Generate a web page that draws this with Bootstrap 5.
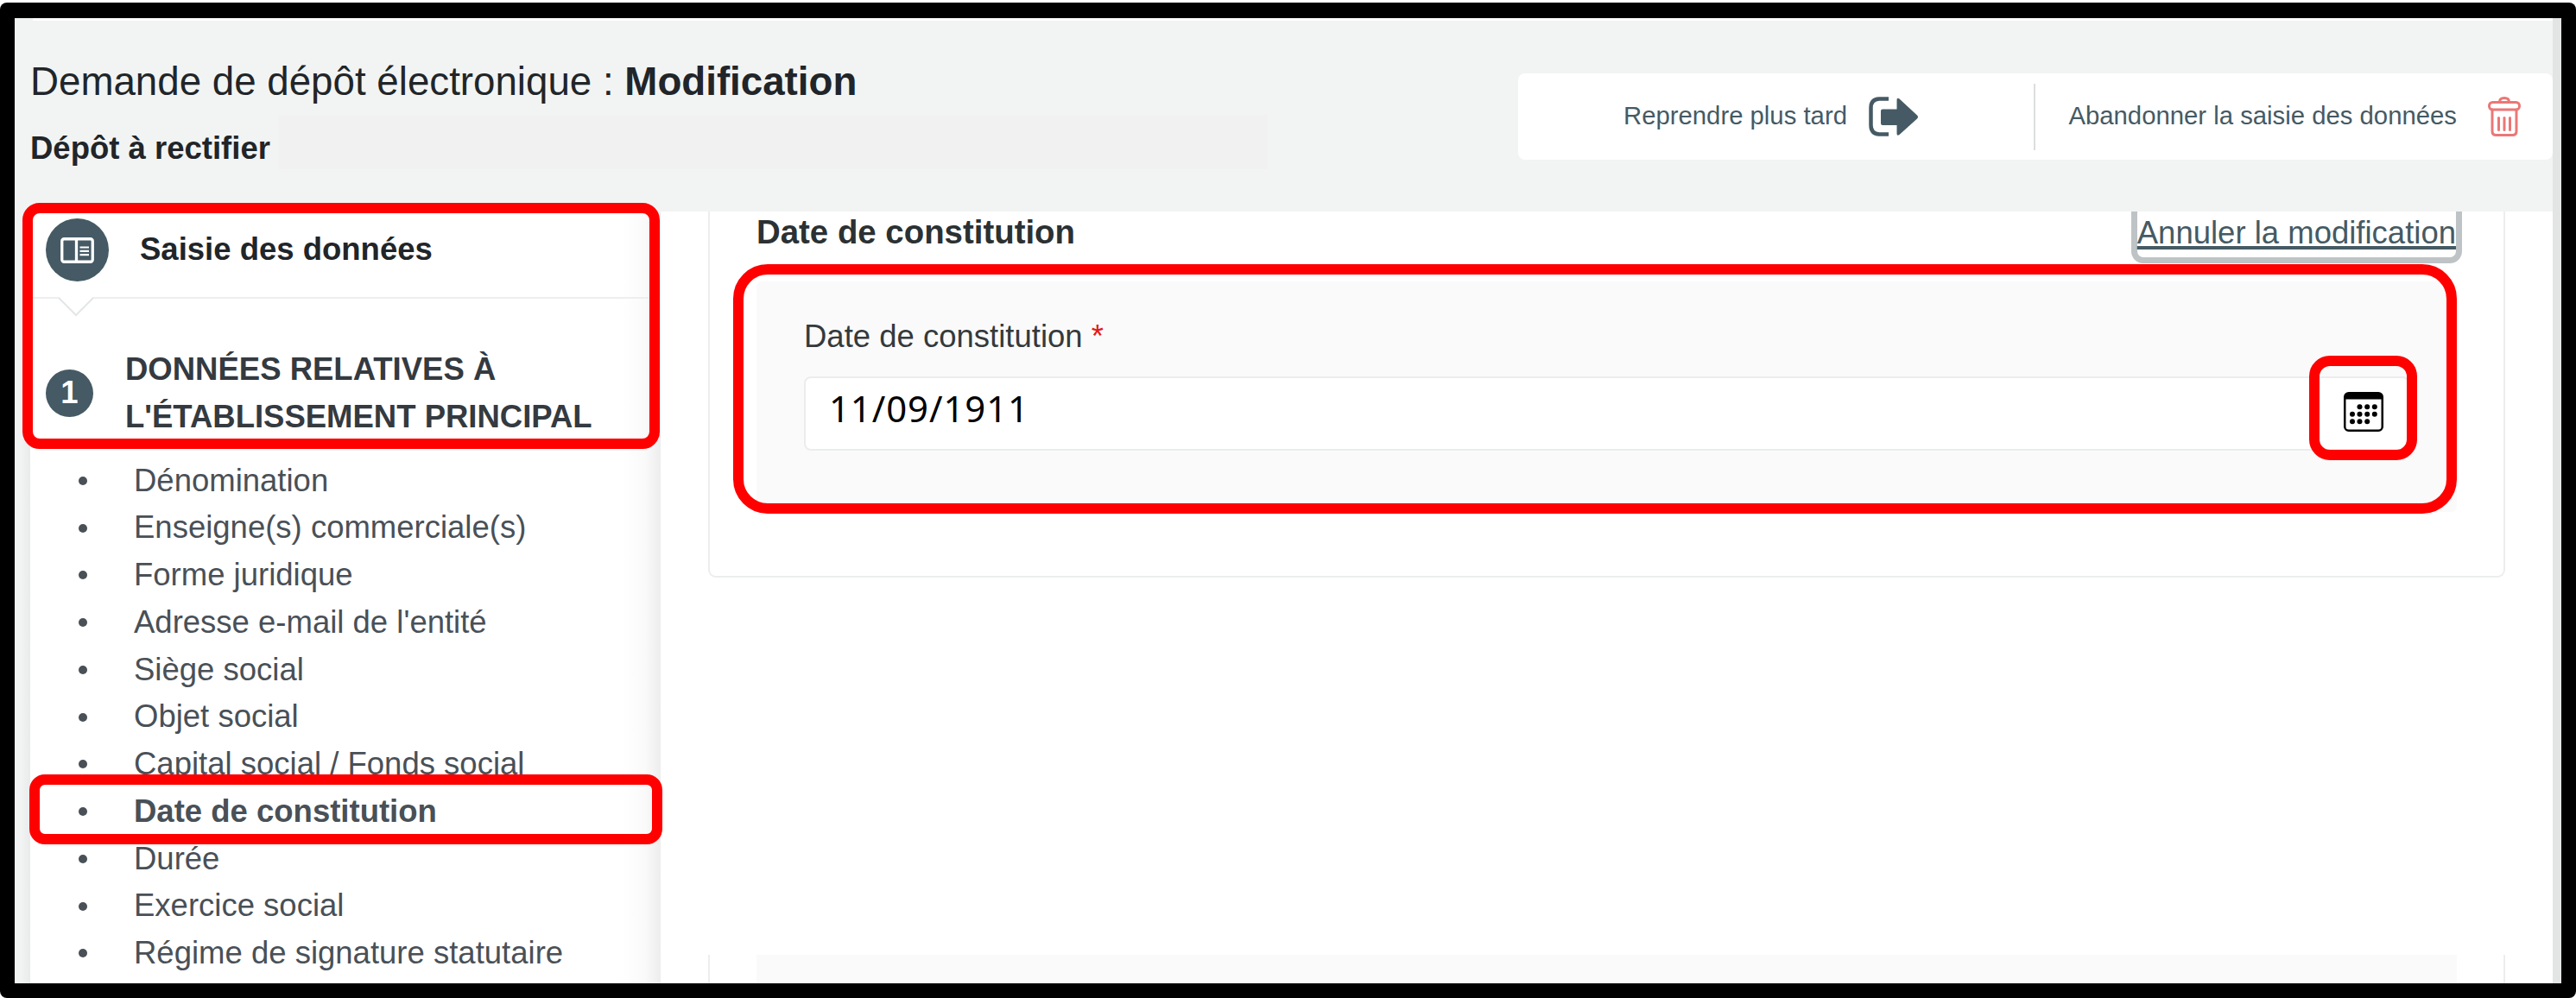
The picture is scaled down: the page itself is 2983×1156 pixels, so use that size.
<!DOCTYPE html>
<html lang="fr">
  <head>
    <meta charset="UTF-8" />
    <title>Demande de dépôt électronique</title>
    <link
      href="https://cdn.jsdelivr.net/npm/bootstrap@5.3.0/dist/css/bootstrap.min.css"
      rel="stylesheet"
    />
    <style>
      body {
        font-family: "Liberation Sans", Arial, sans-serif;
        font-size: 36.5px;
        line-height: 54.75px;
        color: #212529;
        background: #fff;
      }
      .frame {
        width: 2983px;
        height: 1153px;
        margin-top: 3px;
        padding: 18px 17px 17px;
        background: #000;
        border-radius: 8px;
      }
      .scroll-track { width: 10px; background: #e2e5e4; }

      /* header */
      .page-head { height: 224px; background: #f2f4f3; padding-left: 18px; }
      .head-strip { height: 3px; margin-left: 3px; background: #fff; }
      .head-title { font-size: 45.7px; line-height: 56px; margin: 43px 0 10px; }
      .head-ref { height: 63px; }
      .head-ref span { padding-top: 12px; width: 287px; }
      .ref-mask { width: 1146px; background: #f1f1f1; }
      .actions {
        width: 1198px;
        height: 100px;
        margin-top: 61px;
        border-radius: 8px;
        font-size: 29.3px;
        color: #455a64;
      }
      .actions span { padding-bottom: 2px; white-space: nowrap; }
      .act-later { width: 597px; padding-left: 122px; gap: 25px; }
      .act-sep { width: 2px; height: 77px; background: #dcdedd; }
      .act-drop { padding-right: 37px; gap: 36px; }

      /* side menu */
      .side-gutter { width: 18px; background: linear-gradient(90deg, #f2f4f3 40%, #e9ebea); }
      .side {
        width: 730px;
        background: linear-gradient(90deg, #fff 94%, #fafafa 97.5%, #ededed);
      }
      .side-head { height: 99px; padding: 0 0 10px 18px; gap: 36px; }
      .dot-icon { width: 73px; height: 73px; background: #455a64; }
      .side-line { height: 2px; background: #eceeef; }
      .side-arrow { margin: -2px 0 0 32px; }
      .side-section { margin-top: 34px; padding-left: 18px; gap: 37px; color: #343a40; }
      .step-no { width: 55px; height: 55px; background: #455a64; }
      .side-list { margin: 19px 0 0; color: #495057; }
      .side-list li { padding-left: 56px; gap: 54px; }
      .side-list li::before {
        content: "";
        width: 10px;
        height: 10px;
        border-radius: 50%;
        background: currentColor;
      }

      /* form area */
      .form-area { padding: 0 55px 0 55px; }
      .form-box {
        height: 424px;
        padding: 0 54px;
        border: 2px solid #eceeed;
        border-top: 0;
        border-radius: 0 0 9px 9px;
      }
      .box-head { height: 81px; }
      .box-title { font-size: 38.4px; line-height: 48px; color: #2b3133; }
      .cancel-link {
        height: 60px;
        line-height: 50.5px;
        margin-right: -6px;
        border: 7px solid #bec3c6;
        border-top: 0;
        border-radius: 0 0 14px 14px;
        color: #455a64;
        text-underline-offset: 3px;
        text-decoration-thickness: 4px;
        text-decoration-skip-ink: none;
      }
      .field-panel { height: 267px; background: #fafafa; padding: 39px 55px 0 55px; border-radius: 6px; }
      .field-label { line-height: 50px; margin-bottom: 21px; color: #343a3d; }
      .req { color: #e3191b; }
      .date-box { height: 86px; border: 2px solid #ebedec; border-radius: 8px; padding-right: 28px; }
      .date-box input {
        font: 41.9px "Noto Sans", sans-serif;
        letter-spacing: 0.9px;
        color: #000;
        padding: 0 0 13px 27px;
      }
      .date-box svg { margin-bottom: 5px; }
      .next-box {
        height: 33px;
        padding: 0 54px;
        border: solid #eceeed;
        border-width: 0 2px;
      }
      .next-box div { height: 100%; background: #fafafa; }

      /* red callouts, drawn over the page */
      .callout { position: absolute; border: 12px solid #f00; pointer-events: none; }
      .c-menu { left: 26px; top: 235px; width: 738px; height: 285px; border-radius: 20px; }
      .c-item { left: 34px; top: 897px; width: 733px; height: 81px; border-radius: 18px; }
      .c-field { left: 849px; top: 306px; width: 1996px; height: 289px; border-radius: 40px; }
      .c-cal { left: 2674px; top: 412px; width: 125px; height: 121px; border-radius: 24px; }
    </style>
  </head>
  <body class="position-relative overflow-hidden">
    <div class="frame d-flex overflow-hidden">
      <div class="flex-grow-1 d-flex flex-column bg-white overflow-hidden">
        <header class="page-head flex-shrink-0">
          <div class="head-strip"></div>
          <div class="d-flex justify-content-between align-items-start">
            <div>
              <h1 class="head-title fw-normal">Demande de dépôt électronique : <b>Modification</b></h1>
              <div class="head-ref d-flex">
                <span class="fw-bold">Dépôt à rectifier</span>
                <div class="ref-mask"></div>
              </div>
            </div>
            <div class="actions bg-white d-flex align-items-center">
              <div class="act-later d-flex align-items-center">
                <span>Reprendre plus tard</span>
                <svg width="58" height="46" viewBox="0 0 58 46">
                  <path d="M23 2.500H12Q2.500 3 2.500 13v20Q2.500 43 12 43.500H23" fill="none" stroke="#455a64" stroke-width="4.500" />
                  <path d="M16 14.500h16.500V4q0-3.500 3-1.500L56 21.500q2 2 0 4L35.500 44Q32.500 46 32.500 42.500V33H16q-2 0-2-2V16.500q0-2 2-2z" fill="#455a64" />
                </svg>
              </div>
              <div class="act-sep"></div>
              <div class="act-drop flex-grow-1 d-flex align-items-center justify-content-end">
                <span>Abandonner la saisie des données</span>
                <svg width="38" height="46" viewBox="0 0 38 46" fill="none" stroke="#eb7777" stroke-width="3" stroke-linecap="round">
                  <path d="M13.500 6q0-4.500 5.500-4.500T24.500 6" />
                  <rect x="1.500" y="6.500" width="35" height="8.500" rx="4" />
                  <path d="M5 15v25q0 4.500 4.500 4.500h19q4.500 0 4.500-4.500V15" />
                  <path d="M12.500 24.500v14M19 24.500v14M25.500 24.500v14" />
                </svg>
              </div>
            </div>
          </div>
        </header>

        <div class="flex-grow-1 d-flex">
          <div class="side-gutter"></div>
          <nav class="side">
            <div class="side-head d-flex align-items-center">
              <div class="dot-icon rounded-circle d-flex align-items-center justify-content-center">
                <svg width="39" height="30" viewBox="0 0 39 30" fill="none" stroke="#fff">
                  <rect x="1.750" y="1.750" width="35.500" height="26.500" rx="2.500" stroke-width="3.300" />
                  <path d="M18.500 2v26" stroke-width="3.300" />
                  <path d="M22.500 11.500h10.500M22.500 15.800h10.500M22.500 20.200h10.500" stroke-width="2.200" />
                </svg>
              </div>
              <span class="fw-bold">Saisie des données</span>
            </div>
            <div class="side-line"></div>
            <svg class="side-arrow d-block" width="42" height="23" viewBox="0 0 42 23">
              <path d="M1 0L21 21L41 0z" fill="#fff" />
              <path d="M1 1L21 21L41 1" fill="none" stroke="#e4e6e8" stroke-width="2" />
            </svg>
            <div class="side-section d-flex align-items-center fw-bold">
              <div class="step-no rounded-circle text-white d-flex align-items-center justify-content-center">1</div>
              <div>DONNÉES RELATIVES À<br />L'ÉTABLISSEMENT PRINCIPAL</div>
            </div>
            <ul class="side-list list-unstyled">
              <li class="d-flex align-items-center">Dénomination</li>
              <li class="d-flex align-items-center">Enseigne(s) commerciale(s)</li>
              <li class="d-flex align-items-center">Forme juridique</li>
              <li class="d-flex align-items-center">Adresse e-mail de l'entité</li>
              <li class="d-flex align-items-center">Siège social</li>
              <li class="d-flex align-items-center">Objet social</li>
              <li class="d-flex align-items-center">Capital social / Fonds social</li>
              <li class="d-flex align-items-center fw-bold">Date de constitution</li>
              <li class="d-flex align-items-center">Durée</li>
              <li class="d-flex align-items-center">Exercice social</li>
              <li class="d-flex align-items-center">Régime de signature statutaire</li>
            </ul>
          </nav>

          <main class="form-area flex-grow-1 d-flex flex-column justify-content-between">
            <section class="form-box">
              <div class="box-head d-flex justify-content-between align-items-start">
                <h2 class="box-title fw-bold m-0">Date de constitution</h2>
                <a href="#" class="cancel-link">Annuler la modification</a>
              </div>
              <div class="field-panel">
                <label for="dateConstitution" class="field-label d-block">Date de constitution <span class="req">*</span></label>
                <div class="date-box bg-white d-flex align-items-center">
                  <input id="dateConstitution" type="text" class="flex-grow-1 h-100 border-0 bg-transparent" value="11/09/1911" />
                  <svg width="46" height="46" viewBox="0 0 46 46">
                    <rect x="1.250" y="1.250" width="43.500" height="43.500" rx="4.500" fill="#fff" stroke="#000" stroke-width="2.500" />
                    <path d="M1 8.500V5q0-4 4-4h36q4 0 4 4v3.500z" />
                    <g>
                      <circle cx="18.500" cy="17.300" r="3" /><circle cx="27.200" cy="17.300" r="3" /><circle cx="35.800" cy="17.300" r="3" />
                      <circle cx="10" cy="25.800" r="3" /><circle cx="18.500" cy="25.800" r="3" /><circle cx="27.200" cy="25.800" r="3" /><circle cx="35.800" cy="25.800" r="3" />
                      <circle cx="10" cy="34.200" r="3" /><circle cx="18.500" cy="34.200" r="3" /><circle cx="27.200" cy="34.200" r="3" />
                    </g>
                  </svg>
                </div>
              </div>
            </section>
            <section class="next-box"><div></div></section>
          </main>
        </div>
      </div>
      <div class="scroll-track"></div>
    </div>

    <div class="callout c-menu"></div>
    <div class="callout c-item"></div>
    <div class="callout c-field"></div>
    <div class="callout c-cal"></div>

    <script src="https://cdn.jsdelivr.net/npm/bootstrap@5.3.0/dist/js/bootstrap.bundle.min.js"></script>
  </body>
</html>
